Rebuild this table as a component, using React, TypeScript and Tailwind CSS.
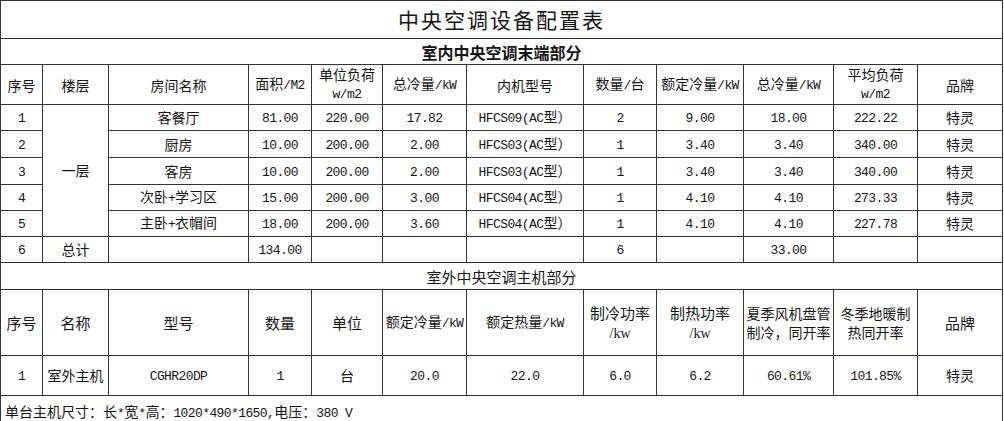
import React from 'react';

// ascii runs use a half-width mono face, like the SimSun latin in the original sheet
const Txt = ({ s }: { s: string }) => (
	<>
		{s
			.split(/([\x20-\x7e]+)/)
			.filter(Boolean)
			.map((p, i) =>
				/^[\x20-\x7e]+$/.test(p) ? (
					<span key={i} className="font-['Liberation_Mono',monospace] text-[13px] tracking-[-0.6px]">
						{p}
					</span>
				) : (
					<span key={i}>{p}</span>
				),
			)}
	</>
);

const cell = 'border border-[#333] p-0 text-center align-middle whitespace-nowrap';

const colWidths = [42, 66, 140, 63, 71, 84, 117, 73, 87, 90, 84, 85];

const indoorRows = [
	['1', '客餐厅', '81.00', '220.00', '17.82', 'HFCS09(AC型）', '2', '9.00', '18.00', '222.22'],
	['2', '厨房', '10.00', '200.00', '2.00', 'HFCS03(AC型）', '1', '3.40', '3.40', '340.00'],
	['3', '客房', '10.00', '200.00', '2.00', 'HFCS03(AC型）', '1', '3.40', '3.40', '340.00'],
	['4', '次卧+学习区', '15.00', '200.00', '3.00', 'HFCS04(AC型）', '1', '4.10', '4.10', '273.33'],
	['5', '主卧+衣帽间', '18.00', '200.00', '3.60', 'HFCS04(AC型）', '1', '4.10', '4.10', '227.78'],
];

const rowHeights = ['h-[26px]', 'h-[27px]', 'h-[27px]', 'h-[26px]', 'h-[26px]'];

const App: React.FC = () => {
	return (
		<div className="w-[1004px] h-[421px] overflow-hidden bg-white text-[#151515] font-['Noto_Sans_CJK_SC',sans-serif] text-[14px]">
			<table className="table-fixed border-collapse w-[1003px]">
				<colgroup>
					{colWidths.map((w, i) => (
						<col key={i} style={{ width: w }} />
					))}
				</colgroup>
				<tbody>
					{/* title */}
					<tr className="h-[38px]">
						<td colSpan={12} className={`${cell} text-[21px] tracking-[2px] leading-none`}>
							中央空调设备配置表
						</td>
					</tr>
					<tr className="h-[26px]">
						<td colSpan={12} className={`${cell} text-[16px] font-bold leading-none`}>
							室内中央空调末端部分
						</td>
					</tr>

					{/* indoor header */}
					<tr className="h-[37px] leading-[18px]">
						<td className={cell}>序号</td>
						<td className={cell}>楼层</td>
						<td className={cell}>房间名称</td>
						<td className={cell}>
							<Txt s="面积/M2" />
						</td>
						<td className={cell}>
							单位负荷
							<br />
							<Txt s="w/m2" />
						</td>
						<td className={cell}>
							<Txt s="总冷量/kW" />
						</td>
						<td className={cell}>内机型号</td>
						<td className={cell}>
							<Txt s="数量/台" />
						</td>
						<td className={cell}>
							<Txt s="额定冷量/kW" />
						</td>
						<td className={cell}>
							<Txt s="总冷量/kW" />
						</td>
						<td className={cell}>
							平均负荷
							<br />
							<Txt s="w/m2" />
						</td>
						<td className={cell}>品牌</td>
					</tr>

					{indoorRows.map((r, i) => (
						<tr key={r[0]} className={rowHeights[i]}>
							<td className={cell}>
								<Txt s={r[0]} />
							</td>
							{i === 0 && (
								<td rowSpan={5} className={cell}>
									一层
								</td>
							)}
							{r.slice(1).map((v, j) => (
								<td key={j} className={cell}>
									<Txt s={v} />
								</td>
							))}
							<td className={cell}>特灵</td>
						</tr>
					))}

					<tr className="h-[26px]">
						<td className={cell}>
							<Txt s="6" />
						</td>
						<td className={cell}>总计</td>
						<td className={cell}></td>
						<td className={cell}>
							<Txt s="134.00" />
						</td>
						<td className={cell}></td>
						<td className={cell}></td>
						<td className={cell}></td>
						<td className={cell}>
							<Txt s="6" />
						</td>
						<td className={cell}></td>
						<td className={cell}>
							<Txt s="33.00" />
						</td>
						<td className={cell}></td>
						<td className={cell}></td>
					</tr>

					{/* outdoor unit */}
					<tr className="h-[27px]">
						<td colSpan={12} className={`${cell} text-[15px] leading-none`}>
							室外中央空调主机部分
						</td>
					</tr>
					<tr className="h-[66px] leading-[19px] text-[15px]">
						<td className={cell}>序号</td>
						<td className={cell}>名称</td>
						<td className={cell}>型号</td>
						<td className={cell}>数量</td>
						<td className={cell}>单位</td>
						<td className={`${cell} text-[14px]`}>
							<Txt s="额定冷量/kW" />
						</td>
						<td className={`${cell} text-[14px]`}>
							<Txt s="额定热量/kW" />
						</td>
						<td className={cell}>
							制冷功率
							<br />
							<span className="font-['Liberation_Serif',serif] text-[14px]">/kw</span>
						</td>
						<td className={cell}>
							制热功率
							<br />
							<span className="font-['Liberation_Serif',serif] text-[14px]">/kw</span>
						</td>
						<td className={`${cell} text-[14px]`}>
							夏季风机盘管
							<br />
							制冷，同开率
						</td>
						<td className={`${cell} text-[14px]`}>
							冬季地暖制
							<br />
							热同开率
						</td>
						<td className={cell}>品牌</td>
					</tr>
					<tr className="h-[40px]">
						{['1', '室外主机', 'CGHR20DP', '1', '台', '20.0', '22.0', '6.0', '6.2', '60.61%', '101.85%', '特灵'].map(
							(v, i) => (
								<td key={i} className={cell}>
									<Txt s={v} />
								</td>
							),
						)}
					</tr>

					{/* footnote, its lower edge falls just past the visible sheet */}
					<tr className="h-[29px]">
						<td
							colSpan={12}
							className="border border-[#333] px-1 pt-[6px] pb-0 text-left align-top leading-[18px] whitespace-nowrap"
						>
							<Txt s="单台主机尺寸：长*宽*高：1020*490*1650,电压：380 V" />
						</td>
					</tr>
				</tbody>
			</table>
		</div>
	);
};

export default App;
